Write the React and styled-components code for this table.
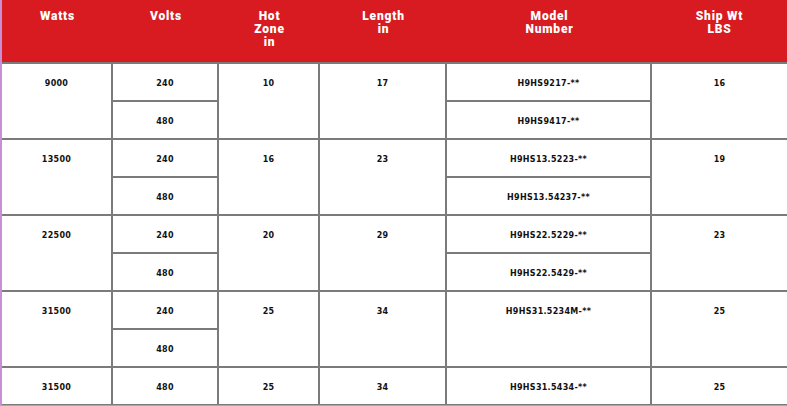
import React from 'react';
import styled, { createGlobalStyle } from 'styled-components';

const GlobalStyle = createGlobalStyle`
  html, body {
    margin: 0;
    padding: 0;
    background: #fff;
  }
`;

const Frame = styled.div`
  width: 787px;
  height: 406px;
  box-sizing: border-box;
  border-left: 2px solid #c88fd6;
  border-bottom: 1px solid #c88fd6;
  overflow: hidden;
`;

const Table = styled.table`
  width: 785px;
  border-collapse: separate;
  border-spacing: 0;
  table-layout: fixed;
`;

const HeadCell = styled.th`
  height: 64px;
  box-sizing: border-box;
  padding: 10px 0 0;
  vertical-align: top;
  background: #d81b20;
  color: #fff;
  font-family: Roboto, "Liberation Sans", sans-serif;
  font-weight: 900;
  font-size: 12px;
  line-height: 13px;
  letter-spacing: 0.8px;
  text-align: center;
  border-bottom: 2px solid #7b7b7b;
`;

const Cell = styled.td`
  height: 33px;
  padding: 3px 0 0;
  vertical-align: top;
  text-align: center;
  color: #111;
  font-family: "DejaVu Sans", "Liberation Sans", sans-serif;
  font-weight: bold;
  font-size: 8px;
  line-height: 33px;
  letter-spacing: 0.3px;
  border-bottom: ${p => (p.$last ? '1px' : '2px')} solid #7b7b7b;
  border-right: ${p => (p.$edge ? '0' : '2px solid #7b7b7b')};
`;

const widths = [111, 106, 101, 127, 205, 135];

const headers = [
  ['Watts'],
  ['Volts'],
  ['Hot', 'Zone', 'in'],
  ['Length', 'in'],
  ['Model', 'Number'],
  ['Ship Wt', 'LBS'],
];

const groups = [
  { watts: '9000', zone: '10', length: '17', ship: '16', rows: [['240', 'H9HS9217-**'], ['480', 'H9HS9417-**']] },
  { watts: '13500', zone: '16', length: '23', ship: '19', rows: [['240', 'H9HS13.5223-**'], ['480', 'H9HS13.54237-**']] },
  { watts: '22500', zone: '20', length: '29', ship: '23', rows: [['240', 'H9HS22.5229-**'], ['480', 'H9HS22.5429-**']] },
  { watts: '31500', zone: '25', length: '34', ship: '25', model: 'H9HS31.5234M-**', rows: [['240'], ['480']] },
  { watts: '31500', zone: '25', length: '34', ship: '25', rows: [['480', 'H9HS31.5434-**']] },
];

function GroupRows({ group, last }) {
  const span = group.rows.length;
  const shared = Boolean(group.model);
  return group.rows.map((row, i) => {
    const end = last && i === span - 1;
    return (
      <tr key={i}>
        {i === 0 && <Cell rowSpan={span} $last={last}>{group.watts}</Cell>}
        <Cell $last={end}>{row[0]}</Cell>
        {i === 0 && <Cell rowSpan={span} $last={last}>{group.zone}</Cell>}
        {i === 0 && <Cell rowSpan={span} $last={last}>{group.length}</Cell>}
        {shared
          ? i === 0 && <Cell rowSpan={span} $last={last}>{group.model}</Cell>
          : <Cell $last={end}>{row[1]}</Cell>}
        {i === 0 && <Cell rowSpan={span} $last={last} $edge>{group.ship}</Cell>}
      </tr>
    );
  });
}

export default function App() {
  return (
    <>
      <GlobalStyle />
      <Frame>
        <Table>
          <colgroup>
            {widths.map((w, i) => (
              <col key={i} style={{ width: w }} />
            ))}
          </colgroup>
          <thead>
            <tr>
              {headers.map((lines, i) => (
                <HeadCell key={i}>
                  {lines.map((l, j) => (
                    <div key={j}>{l}</div>
                  ))}
                </HeadCell>
              ))}
            </tr>
          </thead>
          <tbody>
            {groups.map((g, i) => (
              <GroupRows key={i} group={g} last={i === groups.length - 1} />
            ))}
          </tbody>
        </Table>
      </Frame>
    </>
  );
}
